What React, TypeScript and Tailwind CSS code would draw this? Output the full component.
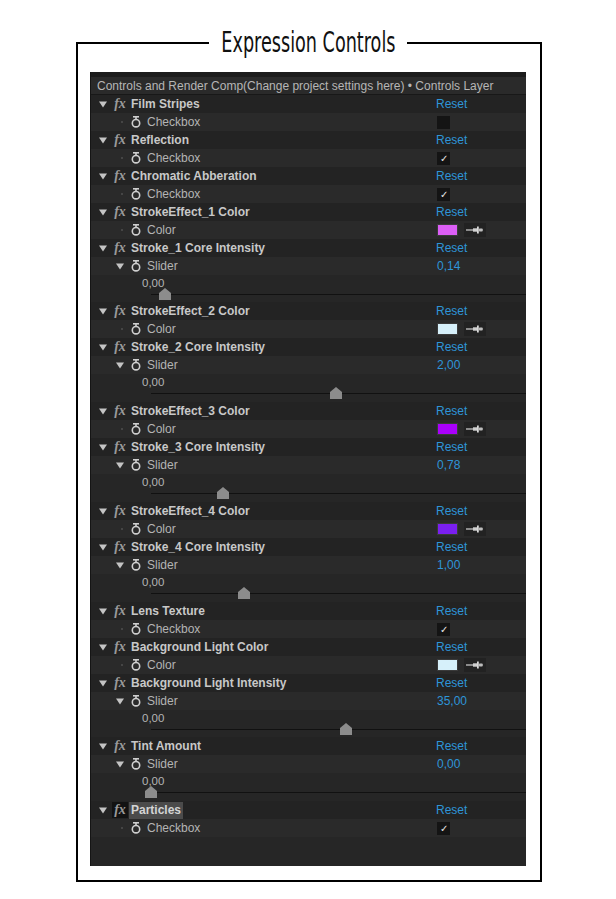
import React from "react";

type Prop =
  | { kind: "checkbox"; checked: boolean }
  | { kind: "color"; color: string }
  | { kind: "slider"; value: string; thumb: number; tall?: boolean };

type Effect = { name: string; prop: Prop; selected?: boolean };

const effects: Effect[] = [
  { name: "Film Stripes", prop: { kind: "checkbox", checked: false } },
  { name: "Reflection", prop: { kind: "checkbox", checked: true } },
  { name: "Chromatic Abberation", prop: { kind: "checkbox", checked: true } },
  { name: "StrokeEffect_1 Color", prop: { kind: "color", color: "#dc5ef6" } },
  { name: "Stroke_1 Core Intensity", prop: { kind: "slider", value: "0,14", thumb: 68 } },
  { name: "StrokeEffect_2 Color", prop: { kind: "color", color: "#d6f0fa" } },
  { name: "Stroke_2 Core Intensity", prop: { kind: "slider", value: "2,00", thumb: 239, tall: true } },
  { name: "StrokeEffect_3 Color", prop: { kind: "color", color: "#aa00fc" } },
  { name: "Stroke_3 Core Intensity", prop: { kind: "slider", value: "0,78", thumb: 126, tall: true } },
  { name: "StrokeEffect_4 Color", prop: { kind: "color", color: "#7a1ff0" } },
  { name: "Stroke_4 Core Intensity", prop: { kind: "slider", value: "1,00", thumb: 147, tall: true } },
  { name: "Lens Texture", prop: { kind: "checkbox", checked: true } },
  { name: "Background Light Color", prop: { kind: "color", color: "#d6f0fa" } },
  { name: "Background Light Intensity", prop: { kind: "slider", value: "35,00", thumb: 249 } },
  { name: "Tint Amount", prop: { kind: "slider", value: "0,00", thumb: 54, tall: true } },
  { name: "Particles", prop: { kind: "checkbox", checked: true }, selected: true },
];

const sans = { fontFamily: '"Liberation Sans", Arial, sans-serif' };

function Triangle() {
  return (
    <svg width="8" height="7" viewBox="0 0 8 7">
      <path d="M0 0.5 L8 0.5 L4 6.5 Z" fill="#c4c4c4" />
    </svg>
  );
}

function Stopwatch() {
  return (
    <svg width="10" height="12" viewBox="0 0 10 12">
      <rect x="2" y="0" width="6" height="1.6" fill="#cfcfcf" />
      <rect x="4.2" y="1" width="1.6" height="2" fill="#cfcfcf" />
      <circle cx="5" cy="7.2" r="3.7" fill="none" stroke="#cfcfcf" strokeWidth="1.6" />
    </svg>
  );
}

function Dropper() {
  return (
    <svg width="20" height="8" viewBox="0 0 20 8">
      <rect x="1" y="3.3" width="8" height="1.4" fill="#b8b8b8" />
      <rect x="8" y="2.3" width="4" height="3.4" fill="#cfcfcf" />
      <rect x="12" y="0.5" width="1.8" height="7" fill="#d8d8d8" />
      <rect x="13.8" y="2.5" width="4" height="3" rx="1" fill="#bdbdbd" />
    </svg>
  );
}

function EffectRow({ name, selected }: { name: string; selected?: boolean }) {
  return (
    <div className="flex h-[18px] items-center bg-[#232323]">
      <div className="ml-[8px] flex w-[13px]">
        <Triangle />
      </div>
      <span
        className={
          selected
            ? "flex h-[16px] w-[16px] items-center justify-center bg-[#121212] text-[14px] font-bold italic leading-none text-[#9a9a9a]"
            : "flex h-[16px] w-[16px] items-center justify-center text-[14px] font-bold italic leading-none text-[#9a9a9a]"
        }
        style={{ fontFamily: '"Liberation Serif", "Times New Roman", serif' }}
      >
        fx
      </span>
      <span
        className={
          selected
            ? "ml-[1px] bg-[#4b4b4b] px-[2px] text-[12px] font-bold leading-[17px] text-[#d4d4d4]"
            : "ml-[3px] text-[12px] font-bold text-[#c8c8c8]"
        }
        style={sans}
      >
        {name}
      </span>
      <span className="ml-auto w-[90px] text-[12px] text-[#2e95d8]" style={sans}>
        Reset
      </span>
    </div>
  );
}

function PropRow({ prop }: { prop: Prop }) {
  const label = prop.kind === "checkbox" ? "Checkbox" : prop.kind === "color" ? "Color" : "Slider";
  return (
    <div className="flex h-[18px] items-center bg-[#2a2a2a]">
      {prop.kind === "slider" ? (
        <div className="ml-[25px] flex w-[15px]">
          <Triangle />
        </div>
      ) : (
        <div className="ml-[30px] flex w-[10px]">
          <span className="h-[2px] w-[2px] bg-[#454545]" />
        </div>
      )}
      <Stopwatch />
      <span className="ml-[6px] text-[12px] text-[#b4b4b4]" style={sans}>
        {label}
      </span>
      <div className="ml-auto flex w-[89px] items-center">
        {prop.kind === "checkbox" && (
          <span className="flex h-[13px] w-[13px] items-center justify-center bg-[#141414] text-[10px] leading-none text-[#e8e8e8]">
            {prop.checked ? "✓" : ""}
          </span>
        )}
        {prop.kind === "color" && (
          <>
            <span
              className="h-[12px] w-[21px] border border-[#3a3a3a]"
              style={{ backgroundColor: prop.color }}
            />
            <span className="ml-[6px] flex h-[14px] w-[22px] items-center justify-center bg-[#222222]">
              <Dropper />
            </span>
          </>
        )}
        {prop.kind === "slider" && (
          <span className="text-[12px] text-[#2e95d8]" style={sans}>
            {prop.value}
          </span>
        )}
      </div>
    </div>
  );
}

function SliderGraph({ thumb, tall }: { thumb: number; tall?: boolean }) {
  return (
    <div className={tall ? "relative h-[28px] bg-[#262626]" : "relative h-[27px] bg-[#262626]"}>
      <span
        className="absolute left-[51px] top-[1px] text-[11.5px] leading-[14px] text-[#b4b4b4]"
        style={sans}
      >
        0,00
      </span>
      <div className="absolute left-[60px] right-0 top-[19px] h-px bg-[#111111]" />
      <svg
        className="absolute top-[13px]"
        style={{ left: thumb }}
        width="12"
        height="12"
        viewBox="0 0 12 12"
      >
        <path d="M0 5 L6 0 L12 5 L12 12 L0 12 Z" fill="#8c8c8c" />
      </svg>
    </div>
  );
}

export default function App() {
  return (
    <div className="min-h-screen bg-white pt-[28px]">
      <fieldset className="ml-[76px] w-[466px] border-2 border-black pb-[14px] pl-[12px] pr-[14px] pt-[14px]">
        <legend className="mx-auto h-[30px] px-[11px] text-[28px] leading-[30px] text-[#111111]">
          <span
            className="-mx-[36px] inline-block scale-x-[0.7] align-top leading-[30px]"
            style={{ fontFamily: '"Liberation Sans Narrow", "DejaVu Sans Condensed", "Liberation Sans", sans-serif' }}
          >
            Expression Controls
          </span>
        </legend>
        <div className="flex h-[794px] w-[436px] flex-col border-l border-[#151515] bg-[#262626]">
          <div className="h-[5px] bg-[#1c1c1c]" />
          <div
            className="flex h-[18px] items-center border-b border-[#181818] bg-[#2a2a2a] pl-[6px] text-[12px] text-[#b6b6b6]"
            style={sans}
          >
            Controls and Render Comp(Change project settings here) • Controls Layer
          </div>
          {effects.map((e) => (
            <div key={e.name} className="flex flex-col">
              <EffectRow name={e.name} selected={e.selected} />
              <PropRow prop={e.prop} />
              {e.prop.kind === "slider" && <SliderGraph thumb={e.prop.thumb} tall={e.prop.tall} />}
            </div>
          ))}
        </div>
      </fieldset>
    </div>
  );
}
